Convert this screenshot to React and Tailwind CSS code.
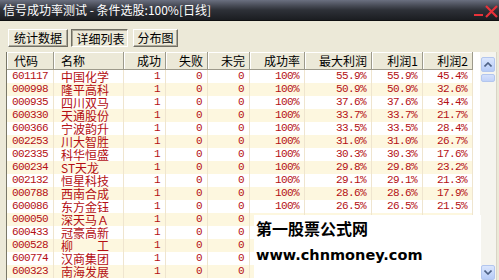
import React from "react";

const rows = [
  ["601117", "中国化学", "55.9%", "55.9%", "45.4%"],
  ["000998", "隆平高科", "50.9%", "50.9%", "32.6%"],
  ["000935", "四川双马", "37.6%", "37.6%", "34.4%"],
  ["600330", "天通股份", "33.7%", "33.7%", "21.7%"],
  ["600366", "宁波韵升", "33.5%", "33.5%", "28.4%"],
  ["002253", "川大智胜", "31.0%", "31.0%", "26.7%"],
  ["002335", "科华恒盛", "30.3%", "30.3%", "17.6%"],
  ["600234", "ST天龙", "29.8%", "29.8%", "23.2%"],
  ["002132", "恒星科技", "29.1%", "29.1%", "21.3%"],
  ["000788", "西南合成", "28.6%", "28.6%", "17.9%"],
  ["600086", "东方金钰", "26.5%", "26.5%", "21.5%"],
  ["000050", "深天马Ａ", "", "", ""],
  ["600433", "冠豪高新", "", "", ""],
  ["000528", "柳　　工", "", "", ""],
  ["600774", "汉商集团", "", "", ""],
  ["600323", "南海发展", "", "", ""],
];

const cols = "grid grid-cols-[47px_70px_42px_42px_42px_55px_67px_51px_50px_1fr]";
const cjk = "font-['Noto_Sans_CJK_SC',sans-serif]";
const mono = "font-['Liberation_Mono',monospace] text-[11px] tracking-[-0.6px]";

function Head({ children, left }) {
  return (
    <div
      className={`h-[18px] leading-[17px] border-r border-b border-[#9d9a8b] shadow-[inset_1px_1px_0_#ffffff] text-[12px] text-black ${
        left ? "pl-[7px] text-left" : "pr-[4px] text-right"
      }`}
    >
      {children}
    </div>
  );
}

function Cell({ children, left, m, pl }) {
  return (
    <div
      className={`h-[13px] leading-[13px] border-r border-[#efe5cf] text-[#b40f14] whitespace-nowrap ${
        left ? pl : "pr-[5px] text-right"
      } ${m ? mono : "text-[12px]"}`}
    >
      {children}
    </div>
  );
}

export default function App() {
  return (
    <div className={`relative w-[499px] h-[280px] overflow-hidden bg-[#ece9d8] flex flex-col ${cjk}`}>
      {/* title bar */}
      <div className="h-[21px] shrink-0 bg-linear-to-b from-[#6b7080] via-[#2e3138] to-[#1b1d21] border-b border-[#0e0f11] flex items-center pl-[3px] relative">
        <span className="text-white text-[12px] leading-[14px] whitespace-nowrap">
          信号成功率测试 - 条件选股:100%[日线]
        </span>
        <svg className="absolute right-0 top-[5px]" width="26" height="13" viewBox="0 0 26 13">
          <rect x="1" y="9" width="9" height="2" fill="#e8323a" />
          <path d="M13 1 L24 12 M24 1 L13 12" stroke="#e8323a" strokeWidth="2.2" />
        </svg>
      </div>

      {/* tabs */}
      <div className="flex mt-[8px] ml-[8px] h-[18px] shrink-0 text-[12px] leading-[16px] text-black">
        <div className="w-[60px] text-center border border-t-white border-l-white border-r-[#716f64] border-b-[#716f64] shadow-[inset_-1px_-1px_0_#aca899]">
          统计数据
        </div>
        <div className="ml-[3px] w-[57px] text-center border border-t-[#716f64] border-l-[#716f64] border-r-white border-b-white shadow-[inset_1px_1px_0_#aca899] pt-[1px] pl-[2px]">
          详细列表
        </div>
        <div className="ml-[5px] w-[45px] text-center border border-t-white border-l-white border-r-[#716f64] border-b-[#716f64] shadow-[inset_-1px_-1px_0_#aca899]">
          分布图
        </div>
      </div>

      {/* table area */}
      <div className="flex mt-[5px] ml-[6px] flex-1 min-h-0">
        <div className="w-[474px] border-l border-[#7a7868] bg-white flex flex-col">
          <div className={`${cols} bg-[#ece9d8]`}>
            <Head left>代码</Head>
            <Head left>名称</Head>
            <Head>成功</Head>
            <Head>失败</Head>
            <Head>未完</Head>
            <Head>成功率</Head>
            <Head>最大利润</Head>
            <Head>利润1</Head>
            <Head>利润2</Head>
            <div className="h-[18px] bg-white" />
          </div>
          {rows.map((r, i) => (
            <div key={r[0]} className={`${cols} ${i % 2 ? "bg-[#fdf7df]" : "bg-white"}`}>
              <Cell left m pl="pl-[5px]">{r[0]}</Cell>
              <Cell left pl="pl-[7px]">{r[1]}</Cell>
              <Cell m>1</Cell>
              <Cell m>0</Cell>
              <Cell m>0</Cell>
              <Cell m>{r[2] ? "100%" : ""}</Cell>
              <Cell m>{r[2]}</Cell>
              <Cell m>{r[3]}</Cell>
              <Cell m>{r[4]}</Cell>
              <div className="h-[13px] bg-white" />
            </div>
          ))}
        </div>

        {/* scrollbar */}
        <div className="w-[17px] bg-[#f5f4ee] border-r border-[#d8d5c6] flex flex-col items-center pt-[5px] relative">
          <div className="w-[14px] h-[15px] rounded-[2px] bg-linear-to-b from-[#dbe6fd] to-[#b6cbf6] border border-[#b3c6ee] flex items-center justify-center">
            <svg width="8" height="5" viewBox="0 0 8 5">
              <path d="M0.5 4.5 L4 1 L7.5 4.5" stroke="#4d6185" strokeWidth="1.6" fill="none" />
            </svg>
          </div>
          <div className="mt-[2px] w-[14px] h-[8px] rounded-[2px] bg-linear-to-b from-[#d5e0fb] to-[#c1d2f8] border border-[#b3c6ee]" />
          <div className="absolute bottom-0 left-[1px] w-[14px] h-[15px] rounded-[2px] bg-linear-to-b from-[#dbe6fd] to-[#b6cbf6] border border-[#b3c6ee] flex items-center justify-center">
            <svg width="8" height="5" viewBox="0 0 8 5">
              <path d="M0.5 0.5 L4 4 L7.5 0.5" stroke="#4d6185" strokeWidth="1.6" fill="none" />
            </svg>
          </div>
        </div>
      </div>

      {/* watermark overlay */}
      <div className="absolute left-[254px] top-[215px] w-[227px] h-[65px] bg-white pl-[2px]">
        <div className={`mt-[4px] text-[16px] leading-[18px] font-bold text-black ${cjk}`}>第一股票公式网</div>
        <div className="mt-[9px] text-[14.5px] leading-[18px] font-bold text-black font-['DejaVu_Sans',sans-serif]">
          www.chnmoney.com
        </div>
      </div>
    </div>
  );
}
